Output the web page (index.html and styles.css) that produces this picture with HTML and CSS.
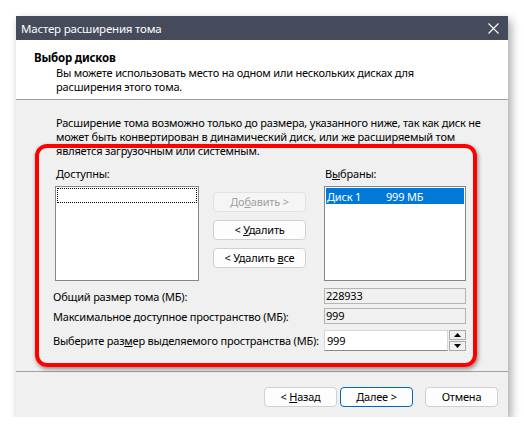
FILE: index.html
```html
<!DOCTYPE html>
<html lang="ru">
<head>
<meta charset="utf-8">
<link rel="stylesheet" href="styles.css">
</head>
<body>
<div class="window">
  <div class="titlebar">
    <span class="title">Мастер расширения тома</span>
    <svg class="close" width="11" height="11" viewBox="0 0 11 11"><path d="M0.5 0.5 L10.5 10.5 M10.5 0.5 L0.5 10.5" stroke="#fff" stroke-width="1.1" fill="none"/></svg>
  </div>
  <div class="header">
    <div class="h-title">Выбор дисков</div>
    <div class="h-sub">Вы можете использовать место на одном или нескольких дисках для<br>расширения этого тома.</div>
  </div>
  <div class="body">
    <p class="note">Расширение тома возможно только до размера, указанного ниже, так как диск не<br>может быть конвертирован в динамический диск, или же расширяемый том<br>является загрузочным или системным.</p>
    <div class="lists">
      <div class="col col-left">
        <div class="lbl"><u>Д</u>оступны:</div>
        <div class="listbox"><div class="focusrow"></div></div>
      </div>
      <div class="mid">
        <button class="btn disabled">До<u>б</u>авить &gt;</button>
        <button class="btn">&lt; <u>У</u>далить</button>
        <button class="btn">&lt; Удалить <u>в</u>се</button>
      </div>
      <div class="col col-right">
        <div class="lbl">В<u>ы</u>браны:</div>
        <div class="listbox listbox-r"><div class="selrow"><span class="c1">Диск 1</span><span>999 МБ</span></div></div>
      </div>
    </div>
    <div class="fields">
      <div class="frow r1"><span class="flabel">Общий размер тома (МБ):</span><div class="ro">228933</div></div>
      <div class="frow r2"><span class="flabel">Максимальное доступное пространство (МБ):</span><div class="ro">999</div></div>
      <div class="frow r3"><span class="flabel">Выберите раз<u>м</u>ер выделяемого пространства (МБ):</span>
        <div class="spin">
          <div class="inp">999</div>
          <div class="arrows">
            <div class="arr"><svg width="7" height="4" viewBox="0 0 7 4"><path d="M0 4 L3.5 0 L7 4 Z" fill="#000"/></svg></div>
            <div class="arr"><svg width="7" height="4" viewBox="0 0 7 4"><path d="M0 0 L3.5 4 L7 0 Z" fill="#000"/></svg></div>
          </div>
        </div>
      </div>
    </div>
    <div class="annot"></div>
  </div>
  <div class="footer">
    <button class="btn fbtn">&lt; <u>Н</u>азад</button>
    <button class="btn fbtn default"><u>Д</u>алее &gt;</button>
    <button class="btn fbtn cancel">Отмена</button>
  </div>
</div>
</body>
</html>
```
FILE: styles.css
```css
* { box-sizing: border-box; }
body {
  margin: 0;
  background: #fff;
  font-family: "Noto Sans", sans-serif;
  font-size: 11px;
  letter-spacing: -0.2px;
  color: #000;
}
.window {
  margin: 16px 0 0 16px;
  width: 492px;
  height: 401px;
  background: #f0f0f0;
  box-shadow: 3px 4px 9px rgba(0, 0, 0, 0.35);
  display: flex;
  flex-direction: column;
}
.titlebar {
  height: 24px;
  background: #454b5a;
  color: #fff;
  display: flex;
  align-items: center;
  justify-content: space-between;
  padding: 0 9px 0 5px;
  flex: none;
}
.title { font-size: 11.5px; }
.close { display: block; }
.header {
  height: 60px;
  background: #fff;
  border-bottom: 1px solid #a0a0a0;
  padding: 11px 0 0 18px;
  flex: none;
  line-height: 14px;
}
.h-title { font-weight: bold; font-size: 11.5px; margin-bottom: 1px; }
.h-sub { padding-left: 22px; }
.body {
  position: relative;
  height: 271px;
  flex: none;
}
.note {
  margin: 0;
  padding: 16px 0 0 40px;
  line-height: 14px;
}
.lists {
  display: flex;
  align-items: flex-start;
  margin-top: 8px;
}
.lbl { line-height: 15px; padding-left: 1px; }
.col-left { margin-left: 39px; width: 144px; }
.col-right { margin-left: 18px; width: 142px; }
.listbox {
  margin-top: 5px;
  height: 95px;
  background: #fff;
  border: 1px solid #82878f;
  padding: 1px;
}
.focusrow {
  height: 15px;
  border: 1px dotted #000;
}
.selrow {
  height: 16px;
  background: #0078d7;
  color: #fff;
  display: flex;
  align-items: center;
  line-height: 15px;
  padding-left: 1px;
}
.selrow .c1 { width: 59px; }
.mid {
  margin-left: 14px;
  width: 93px;
  padding-top: 26px;
  display: flex;
  flex-direction: column;
  gap: 8px;
}
.btn {
  font: inherit;
  letter-spacing: inherit;
  height: 20px;
  width: 93px;
  padding: 0;
  border: 1px solid #d0d0d0;
  border-radius: 4px;
  background: #fdfdfd;
  color: #000;
  line-height: 16px;
}
.btn.disabled { color: #a0a0a0; background: #f5f5f5; border-color: #e2e2e2; }
.fields { margin-top: 7px; }
.frow {
  display: flex;
  align-items: center;
  justify-content: space-between;
  width: 450px;
  padding-left: 37px;
}
.r2 { margin-top: 4px; }
.r3 { margin-top: 6px; }
.ro {
  width: 142px;
  height: 16px;
  border: 1px solid #b4b4b4;
  line-height: 14px;
  padding-left: 1px;
}
.spin {
  width: 142px;
  height: 21px;
  display: flex;
  align-items: flex-start;
}
.inp {
  width: 124px;
  height: 21px;
  background: #fff;
  border: 1px solid #d6d6d6;
  border-bottom-color: #8a8a8a;
  padding-left: 2px;
  line-height: 19px;
}
.arrows {
  margin-left: 1px;
  display: flex;
  flex-direction: column;
  gap: 1px;
}
.arr {
  width: 17px;
  height: 10px;
  border: 1px solid #a9a9a9;
  background: #efefef;
  display: flex;
  align-items: center;
  justify-content: center;
}
.arr svg { display: block; }
.annot {
  position: absolute;
  left: 19px;
  top: 44px;
  width: 442px;
  height: 223px;
  border: 4px solid #ff0000;
  border-radius: 12px;
  box-shadow: 1px 2px 4px rgba(0, 0, 0, 0.45);
}
.footer {
  flex: 1;
  border-top: 1px solid #a0a0a0;
  display: flex;
  justify-content: flex-end;
  align-items: flex-start;
  padding: 15px 10px 0 0;
}
.fbtn { width: 73px; }
.fbtn + .fbtn { margin-left: 3px; }
.fbtn.cancel { margin-left: 12px; }
.fbtn.default { border-color: #0067c0; }
```
